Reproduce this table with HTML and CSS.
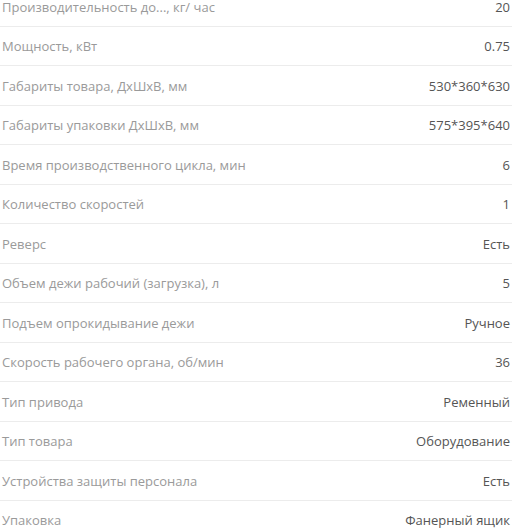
FILE: index.html
```html
<!DOCTYPE html>
<html lang="ru">
<head>
<meta charset="utf-8">
<link rel="stylesheet" href="styles.css">
</head>
<body>
<div class="specs">
  <div class="row"><span class="label">Производительность до..., кг/ час</span><span class="value">20</span></div>
  <div class="row"><span class="label">Мощность, кВт</span><span class="value">0.75</span></div>
  <div class="row"><span class="label">Габариты товара, ДхШхВ, мм</span><span class="value">530*360*630</span></div>
  <div class="row"><span class="label">Габариты упаковки ДхШхВ, мм</span><span class="value">575*395*640</span></div>
  <div class="row"><span class="label">Время производственного цикла, мин</span><span class="value">6</span></div>
  <div class="row"><span class="label">Количество скоростей</span><span class="value">1</span></div>
  <div class="row"><span class="label">Реверс</span><span class="value">Есть</span></div>
  <div class="row"><span class="label">Объем дежи рабочий (загрузка), л</span><span class="value">5</span></div>
  <div class="row"><span class="label">Подъем опрокидывание дежи</span><span class="value">Ручное</span></div>
  <div class="row"><span class="label">Скорость рабочего органа, об/мин</span><span class="value">36</span></div>
  <div class="row"><span class="label">Тип привода</span><span class="value">Ременный</span></div>
  <div class="row"><span class="label">Тип товара</span><span class="value">Оборудование</span></div>
  <div class="row"><span class="label">Устройства защиты персонала</span><span class="value">Есть</span></div>
  <div class="row"><span class="label">Упаковка</span><span class="value">Фанерный ящик</span></div>
</div>
</body>
</html>
```
FILE: styles.css
```css
html, body {
  margin: 0;
  padding: 0;
  background: #fff;
}
body {
  font-family: "Open Sans", "Liberation Sans", sans-serif;
  font-size: 13px;
  overflow: hidden;
}
.specs {
  width: 512px;
  margin-top: -13px;
}
.row {
  display: flex;
  justify-content: space-between;
  align-items: center;
  padding: 10.5px 2px 10px 2px;
  line-height: 18px;
  border-bottom: 1px solid #ececec;
}
.label {
  color: #9a9a9a;
}
.value {
  color: #555;
}
```
